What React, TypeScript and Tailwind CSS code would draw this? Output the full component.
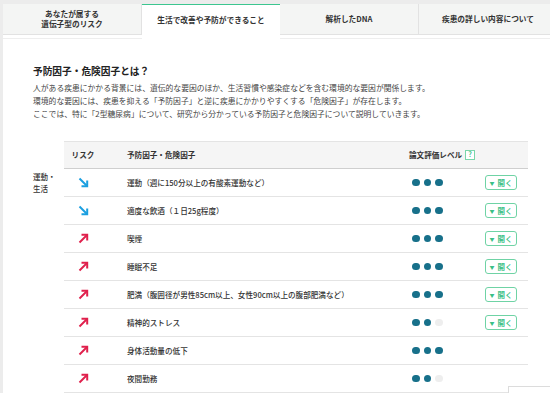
import { Fragment } from 'react';

const tabs = [
  { label: ['あなたが属する', '遺伝子型のリスク'], active: false },
  { label: ['生活で改善や予防ができること'], active: true },
  { label: ['解析したDNA'], active: false },
  { label: ['疾患の詳しい内容について'], active: false },
];

const rows = [
  { dir: 'down', label: '運動（週に150分以上の有酸素運動など）', level: 3, open: true },
  { dir: 'down', label: '適度な飲酒（１日25g程度）', level: 3, open: true },
  { dir: 'up', label: '喫煙', level: 3, open: true },
  { dir: 'up', label: '睡眠不足', level: 3, open: true },
  { dir: 'up', label: '肥満（腹囲径が男性85cm以上、女性90cm以上の腹部肥満など）', level: 3, open: true },
  { dir: 'up', label: '精神的ストレス', level: 2, open: true },
  { dir: 'up', label: '身体活動量の低下', level: 3, open: false },
  { dir: 'up', label: '夜間勤務', level: 2, open: false },
];

const RiskArrow = ({ dir }: { dir: string }) =>
  dir === 'down' ? (
    <svg width="11" height="11" viewBox="0 0 11 11" fill="none" stroke="#1a9fe0" strokeWidth="2">
      <path d="M1.5 1.5 L9 9" />
      <path d="M9.2 3.5 V9.2 H3.5" />
    </svg>
  ) : (
    <svg width="11" height="11" viewBox="0 0 11 11" fill="none" stroke="#e0204c" strokeWidth="2">
      <path d="M1.5 9.5 L9 2" />
      <path d="M3.5 1.8 H9.2 V7.5" />
    </svg>
  );

export default function App() {
  return (
    <div
      className="relative h-[393px] w-[550px] overflow-hidden bg-[#ececec] pl-[3px] pt-[4px] text-[#333]"
      style={{ fontFamily: '"Noto Sans CJK JP", "Noto Sans", sans-serif' }}
    >
      <div className="h-full bg-white">
        {/* Tabs */}
        <div className="flex h-[35px] border-b border-[#eeeeee] bg-white">
          {tabs.map((t, i) => (
            <div
              key={i}
              className={
                t.active
                  ? 'flex h-[35px] w-[138px] shrink-0 flex-col items-center justify-center border-t border-[#3cc690] bg-white pb-[4px] text-[7.7px] font-bold leading-[10px]'
                  : 'flex h-[31px] w-[139px] shrink-0 flex-col items-center justify-center border-b border-r border-[#e2e2e2] bg-[#f4f5f4] text-[7.7px] font-bold leading-[10px]'
              }
            >
              {t.label.map((l) => (
                <span key={l}>{l}</span>
              ))}
            </div>
          ))}
        </div>

        {/* Content */}
        <div className="pl-[30px] pr-[19px] pt-[26px]">
          <h2 className="text-[9.7px] font-bold leading-[13px] text-[#222]">予防因子・危険因子とは？</h2>
          <p className="mt-[2.5px] text-[7.8px] leading-[13px] text-[#444]">
            人がある疾患にかかる背景には、遺伝的な要因のほか、生活習慣や感染症などを含む環境的な要因が関係します。
            <br />
            環境的な要因には、疾患を抑える「予防因子」と逆に疾患にかかりやすくする「危険因子」が存在します。
            <br />
            ここでは、特に「2型糖尿病」について、研究から分かっている予防因子と危険因子について説明していきます。
          </p>

          <div className="mt-[21.5px] flex">
            {/* Category column */}
            <div className="w-[31px] shrink-0 pt-[30px] text-[7.5px] font-medium leading-[12px]">
              運動・
              <br />
              生活
            </div>

            {/* Table */}
            <div className="w-[464px] shrink-0 text-[7.6px]">
              <div className="flex h-[28px] items-center border-b border-t border-b-[#cfcfcf] border-t-[#e4e4e4] bg-[#f5f5f5] font-bold">
                <div className="w-[38px] shrink-0 text-center">リスク</div>
                <div className="flex-1 pl-[25px]">予防因子・危険因子</div>
                <div className="flex w-[76px] shrink-0 items-center">
                  論文評価レベル
                  <span className="ml-[3px] flex h-[10px] w-[10px] items-center justify-center border border-[#7ad6aa] bg-white text-[7px] leading-none text-[#3cbf87]">
                    ?
                  </span>
                </div>
                <div className="w-[43px] shrink-0" />
              </div>

              {rows.map((r, i) => (
                <Fragment key={i}>
                  <div className="flex h-[28px] items-center border-b border-[#e4e4e4] font-medium text-[#333]">
                    <div className="flex w-[38px] shrink-0 justify-center">
                      <RiskArrow dir={r.dir} />
                    </div>
                    <div className="flex-1 whitespace-nowrap pl-[25px]">{r.label}</div>
                    <div className="flex w-[76px] shrink-0 gap-[4px] pl-[3px]">
                      {[0, 1, 2].map((d) => (
                        <span
                          key={d}
                          className={
                            d < r.level
                              ? 'h-[7.5px] w-[7.5px] rounded-full bg-[#17708a]'
                              : 'h-[7.5px] w-[7.5px] rounded-full bg-[#eeeeee]'
                          }
                        />
                      ))}
                    </div>
                    <div className="w-[43px] shrink-0">
                      {r.open && (
                        <button className="flex h-[15px] w-[32px] items-center justify-center gap-[3px] rounded-[3px] border border-[#6fd3a5] bg-white text-[7.5px] font-bold leading-none text-[#3cbf87]">
                          <span className="text-[5px]">▼</span>
                          開く
                        </button>
                      )}
                    </div>
                  </div>
                </Fragment>
              ))}
            </div>
          </div>
        </div>
      </div>

      {/* floating widget corner */}
      <div className="absolute left-[508px] top-[386px] h-[20px] w-[60px] border-l border-t border-[#dcdcdc] bg-white" />
    </div>
  );
}
